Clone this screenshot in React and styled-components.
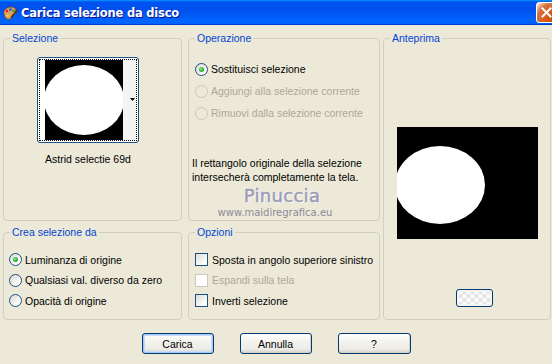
import styled, { createGlobalStyle } from "styled-components";

const GlobalStyle = createGlobalStyle`
  html, body {
    margin: 0;
    padding: 0;
    background: #ece9d8;
  }
  body {
    font-family: "Liberation Sans", Arial, sans-serif;
    font-size: 10.5px;
    color: #000;
  }
`;

const Window = styled.div`
  width: 552px;
  height: 364px;
  display: flex;
  flex-direction: column;
  overflow: hidden;
  background: #ece9d8;
`;

const TitleBar = styled.div`
  height: 25px;
  flex: none;
  display: flex;
  align-items: center;
  padding-left: 2px;
  overflow: hidden;
  background: linear-gradient(
    to bottom,
    #0997ff 0%,
    #0053ee 8%,
    #0050ee 40%,
    #0066ff 88%,
    #0066ff 93%,
    #005bff 95%,
    #003dd7 96%,
    #003dd7 100%
  );
`;

const TitleText = styled.span`
  margin-left: 3px;
  color: #fff;
  font-family: "DejaVu Sans", "Liberation Sans", sans-serif;
  font-weight: bold;
  font-size: 11.5px;
  letter-spacing: -0.2px;
  text-shadow: 1px 1px #0f1089;
`;

const CloseButton = styled.div`
  margin-left: auto;
  margin-right: -5px;
  width: 21px;
  height: 21px;
  box-sizing: border-box;
  border: 1px solid #fff;
  border-radius: 3px;
  display: flex;
  align-items: center;
  justify-content: center;
  background: radial-gradient(
    circle at 90% 90%,
    #cc4600 0%,
    #dc6527 55%,
    #cd7546 70%,
    #ffccb2 90%,
    #fff 100%
  );
`;

const Body = styled.div`
  padding: 7px 0 0 3px;
  flex: 1;
`;

const Grid = styled.div`
  display: grid;
  grid-template-columns: 185px 195px 168px;
  grid-template-rows: 189px 94px;
  row-gap: 5px;
`;

const Group = styled.fieldset`
  margin: 0;
  padding: 0;
  min-width: 0;
  box-sizing: border-box;
  width: ${(p) => p.$w}px;
  grid-column: ${(p) => p.$col};
  grid-row: ${(p) => p.$rows};
  border: 1px solid #d0d0bf;
  border-radius: 4px;
  display: flex;
  flex-direction: column;
`;

const Legend = styled.legend`
  margin-left: 6px;
  padding: 0 2px;
  color: #0046d5;
  font-size: 10.5px;
  line-height: 13px;
`;

const SelectionPane = styled.div`
  display: flex;
  flex-direction: column;
  align-items: center;
  padding-right: 9px;
`;

const Thumb = styled.div`
  margin-top: 12px;
  width: 102px;
  height: 86px;
  box-sizing: border-box;
  border: 1px solid #1c5180;
  border-radius: 3px;
  padding: 1px;
  background: #fff;
`;

const FocusRect = styled.div`
  border: 1px dotted #000;
  height: 100%;
  box-sizing: border-box;
  display: flex;
`;

const Caption = styled.div`
  margin-top: 10px;
  line-height: 13px;
`;

const Options = styled.div`
  display: flex;
  flex-direction: column;
  margin-top: ${(p) => p.$top}px;
  padding-left: ${(p) => p.$left}px;
`;

const Row = styled.label`
  display: flex;
  align-items: center;
  height: ${(p) => p.$h}px;
  color: ${(p) => (p.$disabled ? "#aca899" : "#000")};
  white-space: nowrap;
`;

const Radio = styled.span`
  position: relative;
  flex: none;
  width: 13px;
  height: 13px;
  box-sizing: border-box;
  border-radius: 50%;
  margin-right: 3px;
  border: 1px solid ${(p) => (p.$disabled ? "#cac8bb" : "#1c5180")};
  background: ${(p) =>
    p.$disabled
      ? "#ece9d8"
      : "linear-gradient(135deg, #dcd9d3 0%, #fff 80%)"};

  &::after {
    content: "";
    display: ${(p) => (p.$checked ? "block" : "none")};
    position: absolute;
    left: 3px;
    top: 3px;
    width: 5px;
    height: 5px;
    border-radius: 50%;
    background: radial-gradient(circle at 40% 40%, #8ef08e 0%, #34b534 50%, #1d911d 100%);
  }
`;

const Check = styled.span`
  flex: none;
  width: 13px;
  height: 13px;
  box-sizing: border-box;
  margin-right: 4px;
  border: 1px solid ${(p) => (p.$disabled ? "#cac8bb" : "#1c5180")};
  background: ${(p) =>
    p.$disabled ? "#fff" : "linear-gradient(135deg, #dcdcd7 0%, #fff 80%)"};
`;

const Note = styled.p`
  margin: 32px 0 0 -3px;
  line-height: 14px;
`;

const Watermark = styled.div`
  display: flex;
  flex-direction: column;
  align-items: center;
  margin-top: 2px;
  margin-right: 4px;
`;

const WaterName = styled.div`
  font-family: "DejaVu Sans", sans-serif;
  font-size: 18px;
  line-height: 20px;
  letter-spacing: 0.3px;
  color: #9c9cb8;
  -webkit-text-stroke: 0.5px #9c9cb8;
  text-shadow: 1px 1px 0 #fff, -1px -1px 0 #f6f4ea;
`;

const WaterUrl = styled.div`
  font-family: "DejaVu Sans", sans-serif;
  font-size: 10px;
  line-height: 12px;
  margin-top: 1px;
  color: #8b8b99;
  margin-left: -14px;
`;

const PreviewPane = styled.div`
  display: flex;
  flex-direction: column;
  align-items: center;
`;

const PreviewBox = styled.div`
  margin-top: 82px;
  width: 141px;
  height: 112px;
  background: #000;
  display: flex;
`;

const ZoomButton = styled.div`
  margin-top: 50px;
  margin-left: 15px;
  width: 37px;
  height: 18px;
  box-sizing: border-box;
  border: 1px solid #003c74;
  border-radius: 3px;
  background:
    repeating-conic-gradient(#e4e4e4 0% 25%, #fbfbfb 0% 50%) 50% 50% / 8px 8px;
  box-shadow: inset 0 0 0 2px #f6f6f4;
`;

const ButtonRow = styled.div`
  display: flex;
  justify-content: center;
  gap: 26px;
  margin-top: 13px;
  padding-right: 3px;
`;

const Button = styled.button`
  width: ${(p) => p.$w || 72}px;
  height: 21px;
  padding: 0;
  font-family: "Liberation Sans", Arial, sans-serif;
  font-size: 10.5px;
  color: #000;
  border: 1px solid #003c74;
  border-radius: 3px;
  background: linear-gradient(to bottom, #fff 0%, #f4f3ee 40%, #ecebe6 80%, #d6d0c5 100%);
  box-shadow: ${(p) =>
    p.$default
      ? "inset 0 0 0 1px #a8c8f8, inset 0 0 0 2px #c9dbf8"
      : "inset -1px -1px 0 #d6d0c5"};
`;

const AppIcon = () => (
  <svg width="16" height="16" viewBox="0 0 16 16">
    <path
      d="M2 9 C1 5 5 2 9 2 C13 2 15 5 14 8 C13 10 10 9 10 11 C10 13 8 15 5 14 C3 13 2.5 11 2 9 Z"
      fill="#d8a068"
      stroke="#7a4a20"
      strokeWidth="0.8"
    />
    <circle cx="5" cy="6" r="1.3" fill="#e02020" />
    <circle cx="8.5" cy="4.5" r="1.3" fill="#2050e0" />
    <circle cx="11.5" cy="6" r="1.2" fill="#20a020" />
    <circle cx="5.5" cy="10.5" r="1.3" fill="#f0d020" />
    <path d="M9 13 L15 5" stroke="#4a3010" strokeWidth="1.4" />
  </svg>
);

const CloseIcon = () => (
  <svg width="11" height="11" viewBox="0 0 11 11">
    <path d="M1.5 1.5 L9.5 9.5 M9.5 1.5 L1.5 9.5" stroke="#fff" strokeWidth="2" strokeLinecap="square" />
  </svg>
);

const ThumbImage = () => (
  <svg width="96" height="80" viewBox="0 0 96 80">
    <defs>
      <clipPath id="thumbClip">
        <rect x="5" y="0" width="78" height="80" />
      </clipPath>
    </defs>
    <rect x="0" y="0" width="96" height="80" fill="#fff" />
    <rect x="5" y="0" width="78" height="80" fill="#000" />
    <ellipse cx="44" cy="40" rx="40" ry="35" fill="#fff" clipPath="url(#thumbClip)" />
    <rect x="83" y="0" width="13" height="80" fill="#f4f4f2" />
    <path d="M90 38 L95 38 L92.5 41 Z" fill="#000" />
  </svg>
);

const PreviewImage = () => (
  <svg width="141" height="112" viewBox="0 0 141 112">
    <rect width="141" height="112" fill="#000" />
    <ellipse cx="43" cy="58" rx="45" ry="39" fill="#fff" />
  </svg>
);

export default function App() {
  return (
    <>
      <GlobalStyle />
      <Window>
        <TitleBar>
          <AppIcon />
          <TitleText>Carica selezione da disco</TitleText>
          <CloseButton>
            <CloseIcon />
          </CloseButton>
        </TitleBar>
        <Body>
          <Grid>
            <Group $w={179} $col="1" $rows="1">
              <Legend>Selezione</Legend>
              <SelectionPane>
                <Thumb>
                  <FocusRect>
                    <ThumbImage />
                  </FocusRect>
                </Thumb>
                <Caption>Astrid selectie 69d</Caption>
              </SelectionPane>
            </Group>

            <Group $w={192} $col="2" $rows="1">
              <Legend>Operazione</Legend>
              <Options $top={13} $left={6}>
                <Row $h={22}>
                  <Radio $checked />
                  Sostituisci selezione
                </Row>
                <Row $h={22} $disabled>
                  <Radio $disabled />
                  Aggiungi alla selezione corrente
                </Row>
                <Row $h={22} $disabled>
                  <Radio $disabled />
                  Rimuovi dalla selezione corrente
                </Row>
                <Note>
                  Il rettangolo originale della selezione
                  <br />
                  intersecherà completamente la tela.
                </Note>
              </Options>
              <Watermark>
                <WaterName>Pinuccia</WaterName>
                <WaterUrl>www.maidiregrafica.eu</WaterUrl>
              </Watermark>
            </Group>

            <Group $w={168} $col="3" $rows="1 / span 2">
              <Legend>Anteprima</Legend>
              <PreviewPane>
                <PreviewBox>
                  <PreviewImage />
                </PreviewBox>
                <ZoomButton />
              </PreviewPane>
            </Group>

            <Group $w={179} $col="1" $rows="2">
              <Legend>Crea selezione da</Legend>
              <Options $top={10} $left={5}>
                <Row $h={21}>
                  <Radio $checked />
                  Luminanza di origine
                </Row>
                <Row $h={20}>
                  <Radio />
                  Qualsiasi val. diverso da zero
                </Row>
                <Row $h={21}>
                  <Radio />
                  Opacità di origine
                </Row>
              </Options>
            </Group>

            <Group $w={192} $col="2" $rows="2">
              <Legend>Opzioni</Legend>
              <Options $top={10} $left={6}>
                <Row $h={21}>
                  <Check />
                  Sposta in angolo superiore sinistro
                </Row>
                <Row $h={20} $disabled>
                  <Check $disabled />
                  Espandi sulla tela
                </Row>
                <Row $h={21}>
                  <Check />
                  Inverti selezione
                </Row>
              </Options>
            </Group>
          </Grid>
          <ButtonRow>
            <Button $default>Carica</Button>
            <Button>Annulla</Button>
            <Button $w={73}>?</Button>
          </ButtonRow>
        </Body>
      </Window>
    </>
  );
}
